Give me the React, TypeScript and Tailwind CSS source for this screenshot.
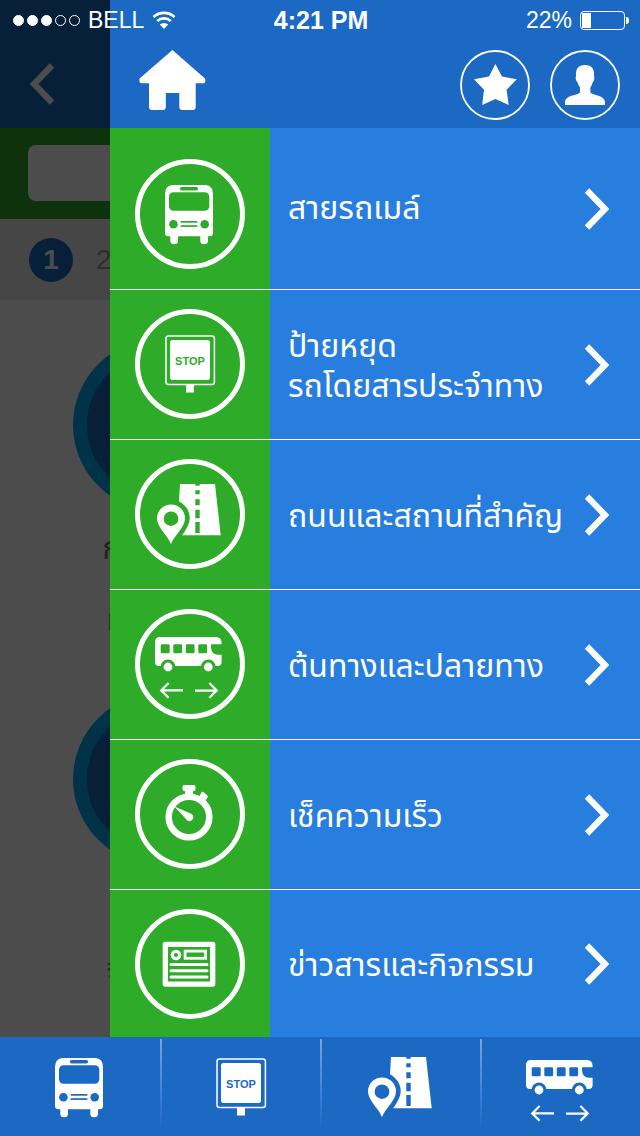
import { Fragment, type ReactNode } from "react";
import { clsx } from "clsx";

interface MenuItem {
  id: string;
  label: string[];
  icon: ReactNode;
}

// Cut-outs are filled with currentColor, so the parent's text colour must equal its background.
const IconBox = ({ children }: { children: ReactNode }) => (
  <svg viewBox="0 0 72 72" className="size-[72px] shrink-0" aria-hidden="true">
    {children}
  </svg>
);

const BusIcon = () => (
  <IconBox>
    <path
      fill="#fff"
      d="M18 7H52Q59 8 59 16V55Q59 58.3 55.5 58.3H54V62.5A3.8 3.8 0 0 1 46.3 62.5V58.3H24V62.5A3.8 3.8 0 0 1 16.3 62.5V58.3H14.5Q11 58.3 11 55V16Q11 8 18 7Z"
    />
    <g fill="currentColor">
      <rect x="26" y="9" width="18" height="3.4" rx="1.6" />
      <rect x="15" y="14.3" width="40.3" height="18.5" rx="4.5" />
      <circle cx="19.4" cy="46.3" r="4.3" />
      <circle cx="50.7" cy="46.3" r="4.3" />
      <rect x="26.7" y="43" width="16.7" height="1.7" />
      <rect x="26.7" y="47.2" width="16.7" height="1.7" />
    </g>
  </IconBox>
);

const StopIcon = () => (
  <IconBox>
    <rect x="12" y="8" width="48.4" height="48.4" rx="2.5" fill="none" stroke="#fff" strokeWidth="1.5" />
    <rect x="16" y="12" width="40" height="40" rx="2.5" fill="#fff" />
    <rect x="32" y="56.5" width="8" height="8" fill="#fff" />
    <text
      x="36"
      y="37"
      textAnchor="middle"
      fill="currentColor"
      className="font-['Liberation_Sans',sans-serif] text-[11px] font-bold"
    >
      STOP
    </text>
  </IconBox>
);

const RoadIcon = () => (
  <IconBox>
    <path d="M26 6H61L66.7 57.3H23Z" fill="#fff" />
    <path
      d="M41.3 6H45.7V7.7H41.3ZM41.3 12.3H45.7V16.3H41.3ZM41.3 21.3H45.7V27.2H41.3ZM41.3 31.7H45.7V40.3H41.3ZM41.3 44H45.7V55H41.3Z"
      fill="currentColor"
    />
    <path
      d="M17 66C14 58 3 49 3 40.5A14 14 0 0 1 31 40.5C31 49 20 58 17 66Z"
      fill="currentColor"
      stroke="currentColor"
      strokeWidth="9.5"
      strokeLinejoin="round"
    />
    <path d="M17 66C14 58 3 49 3 40.5A14 14 0 0 1 31 40.5C31 49 20 58 17 66Z" fill="#fff" />
    <circle cx="17" cy="40.7" r="7.3" fill="currentColor" />
  </IconBox>
);

const RouteIcon = () => (
  <IconBox>
    <path
      d="M6 9H62Q67.6 9 67.6 15V16.3H57V20Q58 26.8 64 26.8H67.6V34Q67.6 38 63.5 38H5Q1 38 1 34V14Q1 9 6 9Z"
      fill="#fff"
    />
    <g fill="currentColor">
      <rect x="6.7" y="16.3" width="9" height="9" rx="1.3" />
      <rect x="19.3" y="16.3" width="8.8" height="9" rx="1.3" />
      <rect x="31.8" y="16.3" width="8.8" height="9" rx="1.3" />
      <rect x="44.3" y="16.3" width="8.8" height="9" rx="1.3" />
      <circle cx="14" cy="39" r="7.5" />
      <circle cx="54.3" cy="39" r="7.5" />
    </g>
    <circle cx="14" cy="39" r="4.4" fill="#fff" />
    <circle cx="54.3" cy="39" r="4.4" fill="#fff" />
    <path
      d="M29 62.4H7.5M14.6 55L7.2 62.4L14.6 69.8M41 62.7H62.5M55.4 55L62.8 62.4L55.4 69.8"
      fill="none"
      stroke="#fff"
      strokeWidth="2.2"
    />
  </IconBox>
);

const TimerIcon = () => (
  <IconBox>
    <circle cx="35" cy="39" r="20.3" fill="none" stroke="#fff" strokeWidth="6.5" />
    <path d="M30 7H40Q41.5 7 41.5 9V11.5Q41.5 13 39 13.2V18H31V13.2Q28.5 13 28.5 11.5V9Q28.5 7 30 7Z" fill="#fff" />
    <path d="M49.5 14L53.6 17.8Q54.2 19 53 20.4L51.2 22.5L50 27L43 20L46 17.3L47 15Q48 13.4 49.5 14Z" fill="#fff" />
    <path d="M20.4 28.4L37.2 35.7A4 4 0 1 1 31.5 40.6Z" fill="#fff" />
  </IconBox>
);

const NewsIcon = () => (
  <IconBox>
    <rect x="11.3" y="16.3" width="47.4" height="39.8" fill="none" stroke="#fff" strokeWidth="5.3" strokeLinejoin="round" />
    <circle cx="22" cy="27" r="3.7" fill="none" stroke="#fff" strokeWidth="3.2" />
    <rect x="31.1" y="23.1" width="20.4" height="7.2" fill="none" stroke="#fff" strokeWidth="2.8" />
    <path d="M17 36.5H53M17 42.7H53M17 49H53" stroke="#fff" strokeWidth="3" strokeLinecap="round" />
  </IconBox>
);

const Chevron = ({ left }: { left?: boolean }) => (
  <svg viewBox="0 0 26 42" className="h-[42px] w-[26px] shrink-0" aria-hidden="true">
    <path
      d={left ? "M24 2.5L6 21L24 39.5" : "M3 2.5L21 21L3 39.5"}
      fill="none"
      stroke="currentColor"
      strokeWidth="6.2"
    />
  </svg>
);

const menu: MenuItem[] = [
  { id: "lines", label: ["สายรถเมล์"], icon: <BusIcon /> },
  { id: "stops", label: ["ป้ายหยุด", "รถโดยสารประจำทาง"], icon: <StopIcon /> },
  { id: "roads", label: ["ถนนและสถานที่สำคัญ"], icon: <RoadIcon /> },
  { id: "routes", label: ["ต้นทางและปลายทาง"], icon: <RouteIcon /> },
  { id: "speed", label: ["เช็คความเร็ว"], icon: <TimerIcon /> },
  { id: "news", label: ["ข่าวสารและกิจกรรม"], icon: <NewsIcon /> },
];

const StatusBar = () => (
  <div className="absolute inset-x-0 top-0 z-10 grid h-10 grid-cols-3 items-center pr-[11px] pl-[13px] font-['Liberation_Sans',sans-serif] text-[23px] leading-none text-white">
    <div className="flex items-center gap-2">
      <span className="flex gap-[3px]" aria-hidden="true">
        {[0, 1, 2, 3, 4].map((n) => (
          <span key={n} className={clsx("size-[11px] rounded-full border border-white", n < 3 && "bg-white")} />
        ))}
      </span>
      <span>BELL</span>
      <svg viewBox="0 0 24 18" className="h-[18px] w-6" aria-hidden="true">
        <path d="M1.5 6A15.5 15.5 0 0 1 22.5 6M5.2 10A10 10 0 0 1 18.8 10" fill="none" stroke="#fff" strokeWidth="2.6" />
        <path d="M12 18L7.8 13.6A6.2 6.2 0 0 1 16.2 13.6Z" fill="#fff" />
      </svg>
    </div>
    <span className="text-center text-[25px] font-bold">4:21 PM</span>
    <div className="flex items-center justify-end gap-2">
      <span>22%</span>
      <span className="flex items-center gap-px" aria-hidden="true">
        <span className="flex h-[19px] w-[45px] rounded-sm border border-white p-px">
          <span className="w-[9px] bg-white" />
        </span>
        <span className="h-[7px] w-[3px] rounded-r-full bg-white" />
      </span>
    </div>
  </div>
);

const StopCard = ({ lines }: { lines: string[] }) => (
  <div className="flex w-[172px] flex-col gap-0.5">
    <div className="size-[172px] rounded-full border-[14px] border-[#00aaf0] bg-[#1b69c3]" />
    <div className="text-center text-[32px] leading-[72px] text-[#777]">
      {lines.map((line) => (
        <p key={line} className="whitespace-nowrap">
          {line}
        </p>
      ))}
    </div>
  </div>
);

const PageBehind = () => (
  <div className="col-start-1 row-start-1 overflow-hidden bg-white" aria-hidden="true">
    <div className="flex h-32 items-center bg-[#1b69c3] px-7 pt-10 text-white">
      <Chevron left />
    </div>
    <div className="bg-[#2fab2a] px-7 pt-[17px] pb-[18px]">
      <input type="text" aria-label="ค้นหา" tabIndex={-1} className="block h-14 w-full rounded-lg bg-white" />
    </div>
    <div className="flex h-[81px] items-center gap-[23px] bg-[#ebebeb] px-[29px] font-['Liberation_Sans',sans-serif] text-[28px]">
      <span className="flex size-11 items-center justify-center rounded-full bg-[#1b69c3] font-bold text-white">1</span>
      <span className="text-[#999]">2</span>
    </div>
    <div className="flex flex-col gap-9 px-[73px] pt-[39px]">
      <StopCard lines={["การไฟฟ้า", "หัวหมาก"]} />
      <StopCard lines={["หมอชิต", "จิตรลดา"]} />
    </div>
  </div>
);

const Drawer = () => (
  <aside className="flex flex-col bg-[#277ede]">
    <div className="flex items-center gap-5 bg-[#1b69c3] pt-[50px] pr-5 pb-2 pl-[29px]">
      <a href="#home" aria-label="หน้าแรก" className="mr-auto self-start">
        <svg viewBox="0 0 67 60" className="h-[60px] w-[67px]" aria-hidden="true">
          <path
            d="M33.4 0L66 28.4Q67.5 33.3 63.5 33.3H56.7V57Q56.7 60 53.7 60H43.3Q40.3 60 40.3 57V43H26.8V57Q26.8 60 23.8 60H13Q10 60 10 57V33.3H3.2Q-0.6 33.3 0.6 28.4Z"
            fill="#fff"
          />
        </svg>
      </a>
      <button type="button" aria-label="รายการโปรด" className="rounded-full">
        <svg viewBox="0 0 70 70" className="size-[70px]" aria-hidden="true">
          <circle cx="35" cy="35" r="34" fill="none" stroke="#fff" strokeWidth="1.8" />
          <path
            d="M35.4 14L42 26.6L56.8 29.3L46.6 39.7L48.7 55L35.4 49L22.2 55L24 39.7L14 29.3L29 26.6Z"
            fill="#fff"
          />
        </svg>
      </button>
      <button type="button" aria-label="บัญชีผู้ใช้" className="rounded-full">
        <svg viewBox="0 0 70 70" className="size-[70px]" aria-hidden="true">
          <circle cx="35" cy="35" r="34" fill="none" stroke="#fff" strokeWidth="1.8" />
          <path
            d="M35 15C41.5 15 44.6 18.5 44 26C44.8 28 44.2 31 42.6 32.4Q42 35.5 40.4 37.5V42.5C43 45.5 55 45 55 52.5V55H15V52.5C15 45 27.5 45.5 30 42.5V37.5Q28.2 35.5 27.6 32.4C25.8 31 25.2 28 26 26C25.5 18.5 28.5 15 35 15Z"
            fill="#fff"
          />
        </svg>
      </button>
    </div>
    <nav>
      {menu.map((item) => (
        <a key={item.id} href={`#${item.id}`} className="group flex border-b border-white last:border-b-0">
          <span className="flex w-40 shrink-0 justify-center bg-[#2fab2a] pt-[19px] pb-5 text-[#2fab2a] group-first:pt-[31px] group-last:pb-[18px]">
            <span className="flex size-[110px] items-center justify-center rounded-full border-[5px] border-white">
              {item.icon}
            </span>
          </span>
          <span className="flex flex-1 items-center justify-between pr-[30px] pl-[18px] text-white">
            <span className="pt-1 text-[32px] leading-10 whitespace-nowrap group-first:pt-0">
              {item.label.map((line, i) => (
                <Fragment key={line}>
                  {i > 0 && <br />}
                  {line}
                </Fragment>
              ))}
            </span>
            <Chevron />
          </span>
        </a>
      ))}
    </nav>
  </aside>
);

const TabBar = () => (
  <nav className="flex h-[99px] bg-[#1b69c3] text-[#1b69c3]">
    {menu.slice(0, 4).map((item, i) => (
      <a
        key={item.id}
        href={`#${item.id}`}
        aria-label={item.label.join("")}
        className="flex flex-1 items-center justify-center"
      >
        {i > 0 && <span className="mt-0.5 h-[92px] w-0.5 self-start bg-linear-to-b from-white/40 to-white/0" />}
        <span className="flex flex-1 justify-center">{item.icon}</span>
      </a>
    ))}
  </nav>
);

export default function App() {
  return (
    <div className="relative flex min-h-screen flex-col bg-white font-['Noto_Sans_Thai','Noto_Sans',sans-serif]">
      <StatusBar />
      <div className="grid flex-1 grid-cols-1">
        <PageBehind />
        <div className="z-[1] col-start-1 row-start-1 bg-black/70" />
        <div className="z-[2] col-start-1 row-start-1 ml-[110px]">
          <Drawer />
        </div>
      </div>
      <TabBar />
    </div>
  );
}
